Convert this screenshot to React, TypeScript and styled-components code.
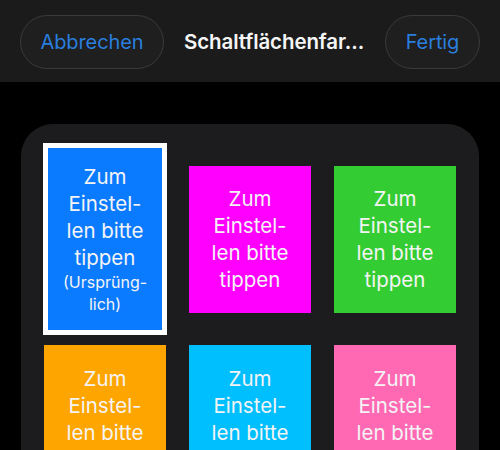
import React from "react";
import styled, { createGlobalStyle } from "styled-components";

const Global = createGlobalStyle`
  html, body { margin: 0; padding: 0; background: #000; overflow: hidden; }
  body { font-family: Inter, "Noto Sans", "Liberation Sans", sans-serif; -webkit-font-smoothing: antialiased; }
  * { box-sizing: border-box; }
`;

const Screen = styled.div`
  width: 500px;
  height: 450px;
  background: #000;
  overflow: hidden;
  display: flex;
  flex-direction: column;
`;

const Header = styled.header`
  height: 82px;
  background: #1b1b1b;
  display: flex;
  align-items: center;
  gap: 20px;
  padding: 1px 20px 0 20px;
  flex-shrink: 0;
`;

const PillButton = styled.button<{ $w: number }>`
  width: ${(p) => p.$w}px;
  height: 54px;
  border-radius: 27px;
  background: #1f1f1f;
  border: 1px solid #3a3a3a;
  color: #2a7ede;
  font-family: inherit;
  font-size: 20px;
  font-weight: 400;
  letter-spacing: -0.1px;
  padding: 0;
  display: flex;
  align-items: center;
  justify-content: center;
  flex-shrink: 0;
`;

const Title = styled.h1`
  flex: 1;
  margin: 0;
  color: #f5f5f5;
  font-size: 20.5px;
  font-weight: 600;
  letter-spacing: -0.1px;
  white-space: nowrap;
`;

const Body = styled.main`
  flex: 1;
  padding: 42px 21px 0 21px;
`;

const Panel = styled.section`
  background: #1c1c1e;
  border-radius: 32px;
  padding: 19px 23px 40px 23px;
  display: grid;
  grid-template-columns: repeat(3, 122px);
  column-gap: 23px;
  row-gap: 10px;
  align-items: center;
`;

const Tile = styled.div<{ $bg: string; $selected?: boolean }>`
  background: ${(p) => p.$bg};
  width: ${(p) => (p.$selected ? 124 : 122)}px;
  height: ${(p) => (p.$selected ? 192 : 147)}px;
  border: ${(p) => (p.$selected ? "5px solid #fff" : "none")};
  justify-self: center;
  display: flex;
  flex-direction: column;
  align-items: center;
  justify-content: center;
  color: #f4f4f4;
  text-align: center;
`;

const Line = styled.span<{ $small?: boolean }>`
  display: block;
  font-size: ${(p) => (p.$small ? 16 : 20.5)}px;
  line-height: ${(p) => (p.$small ? 22 : 27)}px;
  white-space: nowrap;
`;

const tiles = [
  { bg: "#0a7bff", selected: true },
  { bg: "#ff00ff" },
  { bg: "#33cc33" },
  { bg: "#ffa500" },
  { bg: "#00bfff" },
  { bg: "#ff69b4" },
];

export default function App() {
  return (
    <Screen>
      <Global />
      <Header>
        <PillButton $w={144}>Abbrechen</PillButton>
        <Title>Schaltflächenfar...</Title>
        <PillButton $w={95}>Fertig</PillButton>
      </Header>
      <Body>
        <Panel>
          {tiles.map((t, i) => (
            <Tile key={i} $bg={t.bg} $selected={t.selected}>
              <Line>Zum</Line>
              <Line>Einstel-</Line>
              <Line>len bitte</Line>
              <Line>tippen</Line>
              {t.selected && (
                <>
                  <Line $small>(Ursprüng-</Line>
                  <Line $small>lich)</Line>
                </>
              )}
            </Tile>
          ))}
        </Panel>
      </Body>
    </Screen>
  );
}
